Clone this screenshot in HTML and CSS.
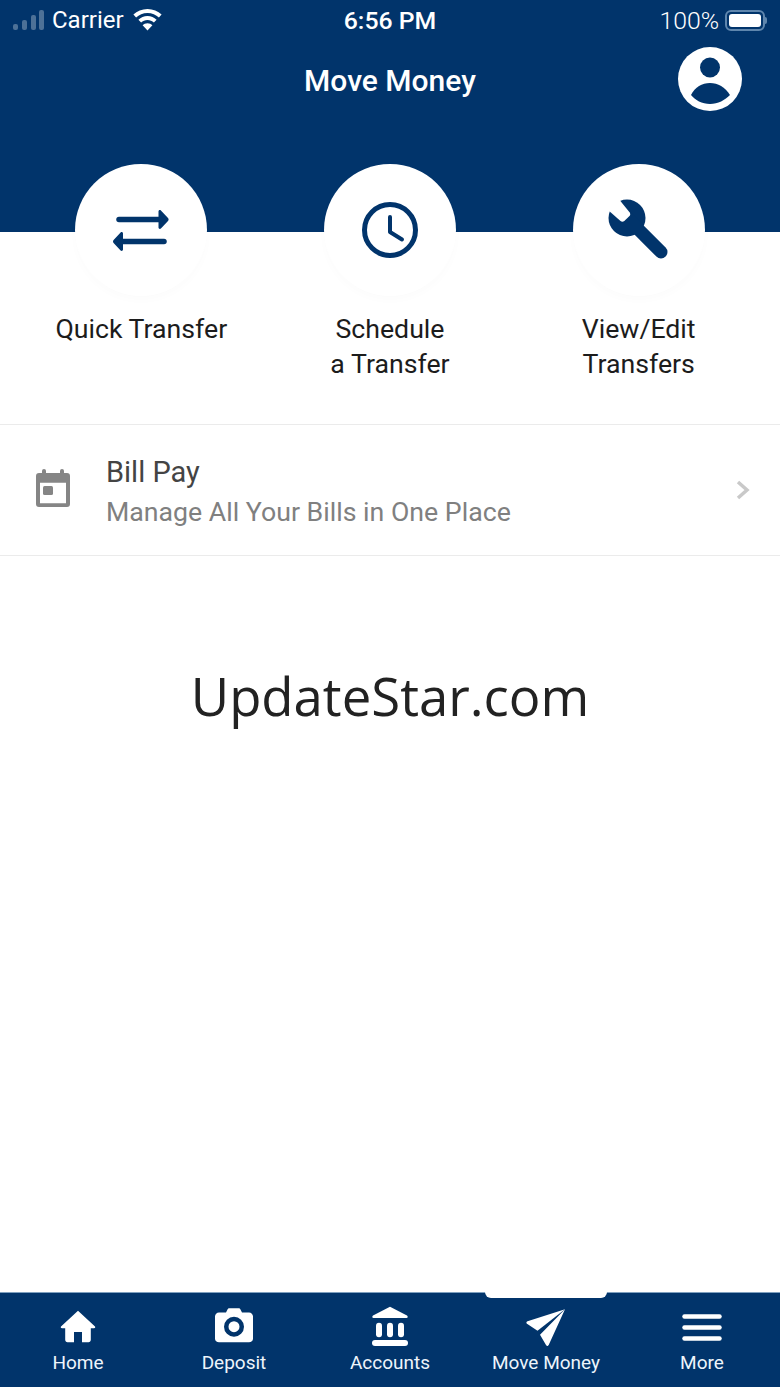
FILE: index.html
```html
<!DOCTYPE html>
<html lang="en">
<head>
<meta charset="utf-8">
<title>Move Money</title>
<link rel="stylesheet" href="styles.css">
</head>
<body>
<div class="app">
  <header class="header">
    <div class="status">
      <div class="status-left">
        <svg class="signal" width="32" height="21" viewBox="0 0 32 21"><rect x="0" y="14" width="5" height="6" rx="2" fill="#fff" opacity=".3"/><rect x="9" y="10" width="5" height="10" rx="2" fill="#fff" opacity=".3"/><rect x="18" y="5" width="5" height="15" rx="2" fill="#fff" opacity=".3"/><rect x="26" y="0" width="5" height="20" rx="2" fill="#fff" opacity=".3"/></svg>
        <span class="carrier">Carrier</span>
        <svg class="wifi" width="29" height="22" viewBox="0 0 29 22"><path d="M14.5 0C9 0 4 2.1.4 5.6l2.7 2.9C6 5.6 10 3.9 14.5 3.9s8.500 1.700 11.400 4.600l2.700-2.900C25 2.100 20 0 14.500 0z" fill="#fff"/><path d="M14.500 7C11 7 7.800 8.400 5.400 10.700l2.700 2.900c1.700-1.600 3.900-2.600 6.400-2.600s4.700 1 6.400 2.600l2.700-2.900C21.200 8.400 18 7 14.500 7z" fill="#fff"/><path d="M14.500 14.200c-2 0-3.700.8-4.900 2l4.900 5.300 4.900-5.300c-1.200-1.200-2.900-2-4.900-2z" fill="#fff"/></svg>
      </div>
      <span class="time">6:56 PM</span>
      <div class="status-right">
        <span class="battery-text">100%</span>
        <span class="battery"><span class="battery-fill"></span></span>
        <span class="battery-cap"></span>
      </div>
    </div>
    <div class="titlebar">
      <h1 class="title">Move Money</h1>
      <svg class="profile" width="64" height="64" viewBox="0 0 64 64"><circle cx="32" cy="32" r="32" fill="#fff"/><circle cx="32" cy="20.500" r="10" fill="#01346b"/><path d="M13 48C17 40 24 36 32 36s15 4 20 12c-5 5-12 9-20 9s-15-4-19-9z" fill="#01346b"/></svg>
    </div>
  </header>

  <main class="main">
    <section class="actions">
      <div class="action">
        <div class="circle">
          <svg width="56" height="41" viewBox="0 0 56 41"><g fill="none" stroke="#01346b" stroke-width="5.500" stroke-linecap="round"><path d="M6 9.500h42"/><path d="M51 31.500H8"/></g><path d="M45.500 1.500c0-1.300 1.500-1.900 2.400-1L55 8c.8.8.8 2.200 0 3l-7.100 7.500c-.9 1-2.400.3-2.400-1z" fill="#01346b"/><path d="M10 23.500c0-1.300-1.500-1.900-2.400-1L.6 30c-.8.8-.8 2.200 0 3l7 7.500c.9 1 2.400.3 2.400-1z" fill="#01346b"/></svg>
        </div>
        <p class="action-label">Quick Transfer</p>
      </div>
      <div class="action">
        <div class="circle">
          <svg width="58" height="58" viewBox="0 0 58 58"><circle cx="29" cy="29" r="25.500" fill="none" stroke="#01346b" stroke-width="5"/><path d="M29 16v15l12 7.500" fill="none" stroke="#01346b" stroke-width="4" stroke-linecap="round" stroke-linejoin="round"/></svg>
        </div>
        <p class="action-label">Schedule<br>a Transfer</p>
      </div>
      <div class="action">
        <div class="circle">
          <svg width="62" height="62" viewBox="0 0 62 62"><circle cx="19" cy="19" r="18.500" fill="#01346b"/><path d="M19 19l34 34" stroke="#01346b" stroke-width="13" stroke-linecap="round" fill="none"/><path d="M10.800 0L0 11l12.500 11c1.300 1 2.500 1 3.800 0l5.200-5c1-1.200 1-2.500 0-3.800z" fill="#fff"/></svg>
        </div>
        <p class="action-label">View/Edit<br>Transfers</p>
      </div>
    </section>

    <section class="row">
      <svg class="row-icon" width="34" height="38" viewBox="0 0 34 38"><rect x="6" y="0" width="4" height="8" rx="2" fill="#858585"/><rect x="24" y="0" width="4" height="8" rx="2" fill="#858585"/><path d="M3 4h28a3 3 0 0 1 3 3v28a3 3 0 0 1-3 3H3a3 3 0 0 1-3-3V7a3 3 0 0 1 3-3zm1 9.700v20.600h26V13.700z" fill="#858585" fill-rule="evenodd"/><rect x="7" y="17" width="10" height="9" rx="1.500" fill="#858585"/></svg>
      <div class="row-text">
        <div class="row-title">Bill Pay</div>
        <div class="row-sub">Manage All Your Bills in One Place</div>
      </div>
      <svg class="chevron" width="14" height="20" viewBox="0 0 14 20"><path d="M2 2l9 8-9 8" fill="none" stroke="#c9c9c9" stroke-width="3.500"/></svg>
    </section>

    <p class="watermark">UpdateStar.com</p>
  </main>

  <nav class="tabbar">
    <span class="tab-indicator"></span>
    <div class="tab">
      <svg width="36" height="36" viewBox="0 0 36 36"><path d="M18 .7L1 16.500c-.6.800 0 1.700 1 1.700h3.200v11.600c0 1.300 1 2.500 2.200 2.500h6.600V22h8v10.300h6.600c1.200 0 2.200-1.200 2.200-2.500V18.200H34c1 0 1.600-.9 1-1.700z" fill="#fff"/></svg>
      <span class="tab-label">Home</span>
    </div>
    <div class="tab">
      <svg width="38" height="38" viewBox="0 0.500 38 38"><path d="M4 5h7l1.500-3c.4-.8 1-1.200 2-1.200h9c1 0 1.600.4 2 1.200L27 5h7c2.200 0 4 1.800 4 4v22.300c0 2.200-1.800 3.500-4 3.500H4c-2.200 0-4-1.300-4-3.500V9c0-2.200 1.800-4 4-4z" fill="#fff"/><circle cx="19" cy="19.200" r="7.750" fill="none" stroke="#01346b" stroke-width="4.500"/></svg>
      <span class="tab-label">Deposit</span>
    </div>
    <div class="tab">
      <svg width="36" height="40" viewBox="0 0 36 40"><path d="M18 .7L1 9.500c-1 .8-1 2.500.5 2.500h33c1.500 0 1.500-1.700.5-2.500z" fill="#fff"/><rect x="4" y="16.700" width="6" height="14.500" rx="3" fill="#fff"/><rect x="15" y="16.700" width="6" height="14.500" rx="3" fill="#fff"/><rect x="26" y="16.700" width="6" height="14.500" rx="3" fill="#fff"/><rect x="0" y="34" width="36" height="6" rx="3" fill="#fff"/></svg>
      <span class="tab-label">Accounts</span>
    </div>
    <div class="tab">
      <svg width="40" height="38" viewBox="0 -0.800 40 38"><path d="M39 .5L1.500 12.500c-1.300.5-1.500 1.800-.5 2.500l10.500 7z" fill="#fff"/><path d="M39 .5L14 26l6 10.300c.7 1.300 2 1.200 2.700 0z" fill="#fff"/></svg>
      <span class="tab-label">Move Money</span>
    </div>
    <div class="tab">
      <svg width="40" height="36" viewBox="0 0 40 36"><g stroke="#fff" stroke-width="4.500" stroke-linecap="round"><path d="M2.500 6.500h35"/><path d="M2.500 17.500h35"/><path d="M2.500 28.500h35"/></g></svg>
      <span class="tab-label">More</span>
    </div>
  </nav>
</div>
</body>
</html>
```
FILE: styles.css
```css
* { box-sizing: border-box; }
html, body { margin: 0; padding: 0; }
body { font-family: Roboto, "Liberation Sans", sans-serif; background: #fff; }
.app { width: 780px; height: 1387px; display: flex; flex-direction: column; overflow: hidden; }

.header { height: 232px; background: #01346b; color: #fff; flex: none; }
.status { height: 40px; display: grid; grid-template-columns: 1fr auto 1fr; align-items: center; padding: 0 13px; font-size: 24px; }
.status-left { display: flex; align-items: center; }
.signal { margin-right: 7px; }
.wifi { margin-left: 9px; }
.time { font-size: 24.800px; font-weight: 500; }
.status-right { display: flex; align-items: center; justify-content: flex-end; }
.battery-text { margin-right: 6px; font-size: 24.800px; font-weight: 300; }
.battery { width: 40px; height: 21px; border: 2px solid #5f86ad; border-radius: 6px; padding: 2px; display: block; }
.battery-fill { display: block; width: 100%; height: 100%; background: #fff; border-radius: 3px; }
.battery-cap { width: 2px; height: 7px; background: #5f86ad; border-radius: 0 2px 2px 0; }

.titlebar { position: relative; height: 80px; display: flex; align-items: center; justify-content: center; }
.title { margin: 0; font-size: 30px; font-weight: 500; }
.profile { position: absolute; right: 38px; top: 7px; }

.main { flex: 1; display: flex; flex-direction: column; }
.actions { display: grid; grid-template-columns: repeat(3, 1fr); padding: 0 17px; margin-top: -68px; height: 260px; }
.action { display: flex; flex-direction: column; align-items: center; }
.circle { width: 132px; height: 132px; border-radius: 50%; background: #fff; display: flex; align-items: center; justify-content: center; box-shadow: 0 4px 8px rgba(0, 0, 0, .015); }
.action-label { margin: 16px 0 0; font-size: 26.700px; line-height: 35px; text-align: center; color: #1c1c1c; }

.row { height: 132px; border-top: 1px solid #ebebeb; border-bottom: 1px solid #ebebeb; display: flex; align-items: center; padding: 0 30px 0 36px; }
.row-icon { flex: none; margin-bottom: 4px; }
.row-text { flex: 1; margin-left: 36px; padding-top: 4px; }
.row-title { font-size: 29px; line-height: 40px; color: #444; }
.row-sub { font-size: 26.700px; line-height: 40px; color: #808080; }

.watermark { margin: 104px 0 0; font-family: "Open Sans", sans-serif; font-size: 52.700px; line-height: 72px; text-align: center; color: #222; }

.tabbar { position: relative; height: 95px; flex: none; background: #01346b; border-top: 1px solid #7fa0bf; display: grid; grid-template-columns: repeat(5, 156px); }
.tab { display: flex; flex-direction: column; align-items: center; justify-content: flex-end; padding-bottom: 11px; color: #fff; }
.tab svg { margin-bottom: 4px; }
.tab-label { font-size: 19px; line-height: 26px; color: #eef5fb; }
.tab-indicator { position: absolute; left: 485px; top: -1px; width: 122px; height: 6px; background: #fff; border-radius: 0 0 6px 6px; }
```
